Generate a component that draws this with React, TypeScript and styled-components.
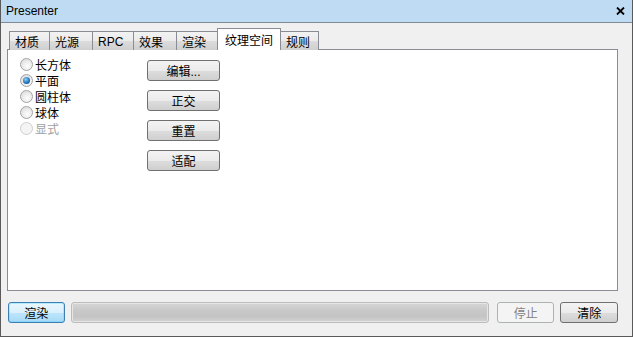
import styled, { createGlobalStyle, css } from "styled-components";

const GlobalStyle = createGlobalStyle`
  html, body {
    margin: 0;
    padding: 0;
    background: #f0f0f0;
  }
  body {
    font-family: "Liberation Sans", "Noto Sans CJK SC", sans-serif;
    font-size: 12px;
    color: #000;
  }
`;

const FONT = `"Liberation Sans", "Noto Sans CJK SC", sans-serif`;

const Window = styled.div`
  width: 633px;
  height: 337px;
  box-sizing: border-box;
  display: flex;
  flex-direction: column;
  background: #f0f0f0;
  border-left: 1px solid #5a5a5a;
  border-right: 1px solid #5a5a5a;
  border-bottom: 1px solid #5a5a5a;
`;

const TitleBar = styled.div`
  height: 22px;
  flex: none;
  display: flex;
  align-items: center;
  justify-content: space-between;
  padding: 0 7px 0 5px;
  background: #bfdbf4;
  border-bottom: 1px solid #7d8b98;
  font-family: ${FONT};
  font-size: 12px;
`;

const CloseIcon = styled.svg`
  width: 9px;
  height: 8px;
`;

const Body = styled.div`
  flex: 1;
  display: flex;
  flex-direction: column;
  padding: 6px 14px 0 6px;
`;

const TabStrip = styled.div`
  display: flex;
  align-items: flex-end;
  height: 21px;
  padding-left: 2px;
  margin-bottom: -1px;
  position: relative;
  z-index: 1;
`;

const Tab = styled.div<{ $w: number; $active?: boolean }>`
  box-sizing: border-box;
  width: ${(p) => p.$w}px;
  height: 19px;
  margin-right: -1px;
  border: 1px solid #898c95;
  border-bottom: none;
  background: linear-gradient(#f2f2f2, #ebebeb 50%, #dcdcdc 51%, #cfcfcf);
  display: flex;
  align-items: center;
  padding-left: 5px;
  padding-top: 1px;
  font-family: ${FONT};
  font-size: 12px;
  white-space: nowrap;
  ${(p) =>
    p.$active &&
    css`
      height: 22px;
      background: #ffffff;
      padding-left: 7px;
      padding-bottom: 2px;
      position: relative;
    `}
`;

const Panel = styled.div`
  box-sizing: border-box;
  height: 242px;
  background: #ffffff;
  border: 1px solid #898c95;
  display: flex;
  padding: 10px 0 0 12px;
`;

const RadioList = styled.div`
  width: 127px;
  display: flex;
  flex-direction: column;
  margin-top: -4px;
`;

const RadioRow = styled.label<{ $disabled?: boolean }>`
  display: flex;
  align-items: center;
  height: 16px;
  gap: 2px;
  font-family: ${FONT};
  font-size: 12px;
  color: ${(p) => (p.$disabled ? "#a0a0a0" : "#000")};
`;

const RadioDot = styled.span<{ $checked?: boolean; $disabled?: boolean }>`
  box-sizing: border-box;
  width: 13px;
  height: 13px;
  border-radius: 50%;
  border: 1px solid ${(p) => (p.$disabled ? "#cfcfcf" : "#a3a3a3")};
  background: ${(p) =>
    p.$disabled
      ? "#f4f4f4"
      : "radial-gradient(circle at 60% 65%, #ffffff, #e8e8e8 55%, #d6d6d6)"};
  display: flex;
  align-items: center;
  justify-content: center;
  flex: none;
  &::after {
    content: "";
    display: ${(p) => (p.$checked ? "block" : "none")};
    width: 7px;
    height: 7px;
    border-radius: 50%;
    background: radial-gradient(circle at 40% 35%, #8fd0f5, #1e6fb5 60%, #0e4b8a);
  }
`;

const ButtonColumn = styled.div`
  display: flex;
  flex-direction: column;
  gap: 9px;
`;

const Button = styled.button<{ $w: number; $primary?: boolean }>`
  box-sizing: border-box;
  width: ${(p) => p.$w}px;
  height: 21px;
  padding: 0;
  border: 1px solid #707070;
  border-radius: 3px;
  background: linear-gradient(#f3f3f3, #ebebeb 50%, #dddddd 51%, #cfcfcf);
  font-family: ${FONT};
  font-size: 12px;
  color: #000;
  display: flex;
  align-items: center;
  justify-content: center;
  ${(p) =>
    p.$primary &&
    css`
      border-color: #3c7fb1;
      background: linear-gradient(#eaf6fd, #d9f0fc 50%, #bee6fd 51%, #a7d9f5);
      box-shadow: inset 0 0 0 1px #48d1ff55;
    `}
  &:disabled {
    border-color: #adb2b5;
    background: #f4f4f4;
    color: #838383;
  }
`;

const BottomBar = styled.div`
  display: flex;
  align-items: center;
  gap: 6px;
  margin-top: 11px;
  padding-left: 1px;
`;

const Progress = styled.div`
  box-sizing: border-box;
  width: 422px;
  height: 21px;
  border: 1px solid #bcbcbc;
  border-radius: 3px;
  background: linear-gradient(#d6d6d6, #c8c8c8 40%, #c4c4c4 70%, #d2d2d2);
  box-shadow: inset 0 0 0 1px #e6e6e6;
  margin-right: 2px;
`;

const tabs = [
  { label: "材质", w: 41 },
  { label: "光源", w: 44 },
  { label: "RPC", w: 42 },
  { label: "效果", w: 44 },
  { label: "渲染", w: 42 },
  { label: "纹理空间", w: 64, active: true },
  { label: "规则", w: 39 },
];

const radios = [
  { label: "长方体" },
  { label: "平面", checked: true },
  { label: "圆柱体" },
  { label: "球体" },
  { label: "显式", disabled: true },
];

const actions = ["编辑...", "正交", "重置", "适配"];

export default function App() {
  return (
    <>
      <GlobalStyle />
      <Window>
        <TitleBar>
          <span>Presenter</span>
          <CloseIcon viewBox="0 0 9 8">
            <path d="M1 0.5 L8 7.5 M8 0.5 L1 7.5" stroke="#000" strokeWidth="1.8" />
          </CloseIcon>
        </TitleBar>
        <Body>
          <TabStrip>
            {tabs.map((t) => (
              <Tab key={t.label} $w={t.w} $active={t.active}>
                {t.label}
              </Tab>
            ))}
          </TabStrip>
          <Panel>
            <RadioList>
              {radios.map((r) => (
                <RadioRow key={r.label} $disabled={r.disabled}>
                  <RadioDot $checked={r.checked} $disabled={r.disabled} />
                  {r.label}
                </RadioRow>
              ))}
            </RadioList>
            <ButtonColumn>
              {actions.map((a) => (
                <Button key={a} $w={73}>
                  {a}
                </Button>
              ))}
            </ButtonColumn>
          </Panel>
          <BottomBar>
            <Button $w={57} $primary>
              渲染
            </Button>
            <Progress />
            <Button $w={58} disabled>
              停止
            </Button>
            <Button $w={58}>清除</Button>
          </BottomBar>
        </Body>
      </Window>
    </>
  );
}
